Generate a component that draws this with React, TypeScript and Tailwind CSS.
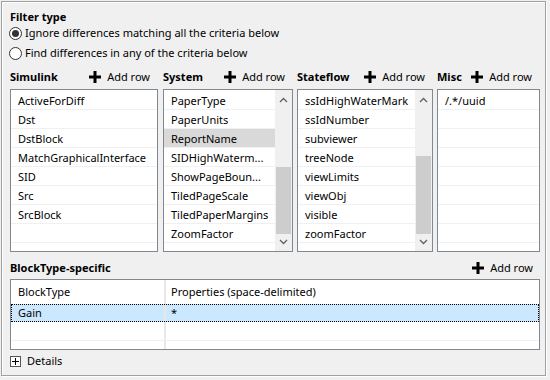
const simulink = ["ActiveForDiff", "Dst", "DstBlock", "MatchGraphicalInterface", "SID", "Src", "SrcBlock", "", ""];
const system = ["PaperType", "PaperUnits", "ReportName", "SIDHighWaterm...", "ShowPageBoun...", "TiledPageScale", "TiledPaperMargins", "ZoomFactor", ""];
const stateflow = ["ssIdHighWaterMark", "ssIdNumber", "subviewer", "treeNode", "viewLimits", "viewObj", "visible", "zoomFactor", ""];
const misc = ["/.*/uuid", "", "", "", "", "", "", "", ""];

function PlusIcon() {
  return (
    <svg width="12" height="12" viewBox="0 0 12 12">
      <rect x="4.5" y="0" width="3" height="12" fill="#000" />
      <rect x="0" y="4.5" width="12" height="3" fill="#000" />
    </svg>
  );
}

function AddRow() {
  return (
    <div className="flex items-center gap-[6px] font-normal">
      <PlusIcon />
      <span>Add row</span>
    </div>
  );
}

function Chevron({ up }: { up?: boolean }) {
  return (
    <svg width="9" height="6" viewBox="0 0 9 6">
      <polyline
        points={up ? "1,5 4.5,1.5 8,5" : "1,1 4.5,4.5 8,1"}
        fill="none"
        stroke="#606060"
        strokeWidth="1.3"
      />
    </svg>
  );
}

function Scrollbar({ thumbTop, thumbHeight }: { thumbTop: number; thumbHeight: number }) {
  return (
    <div className="relative w-[17px] h-full bg-[#f0f0f0] shrink-0">
      <div className="absolute top-[7px] left-0 w-full flex justify-center">
        <Chevron up />
      </div>
      <div
        className="absolute left-[1px] right-[1px] bg-[#cdcdcd]"
        style={{ top: thumbTop, height: thumbHeight }}
      />
      <div className="absolute bottom-[6px] left-0 w-full flex justify-center">
        <Chevron />
      </div>
    </div>
  );
}

function ListBox({
  items,
  selected,
  scroll,
}: {
  items: string[];
  selected?: number;
  scroll?: { top: number; height: number };
}) {
  return (
    <div className="flex h-[163px] border border-[#828790] bg-white overflow-hidden">
      <div className="flex-1 pt-[1px] overflow-hidden">
        {items.map((it, i) => (
          <div
            key={i}
            className={`h-[19px] border-b border-[#f0f0f0] pl-[7px] leading-[20px] whitespace-nowrap overflow-hidden ${
              selected === i ? "bg-[#d9d9d9]" : ""
            }`}
          >
            {it}
          </div>
        ))}
      </div>
      {scroll && <Scrollbar thumbTop={scroll.top} thumbHeight={scroll.height} />}
    </div>
  );
}

function Column({
  title,
  width,
  items,
  selected,
  scroll,
}: {
  title: string;
  width: string;
  items: string[];
  selected?: number;
  scroll?: { top: number; height: number };
}) {
  return (
    <div className={`flex flex-col ${width}`}>
      <div className="flex items-center justify-between h-[16px] pr-[8px] font-bold">
        <span>{title}</span>
        <AddRow />
      </div>
      <div className="mt-[4px]">
        <ListBox items={items} selected={selected} scroll={scroll} />
      </div>
    </div>
  );
}

function Radio({ checked, label }: { checked?: boolean; label: string }) {
  return (
    <div className="flex items-center h-[16px] gap-[1px]">
      <div className="w-[13px] h-[13px] rounded-full border border-[#333] bg-white flex items-center justify-center ml-[-1px]">
        {checked && <div className="w-[7px] h-[7px] rounded-full bg-[#333]" />}
      </div>
      <span className="ml-[2px]">{label}</span>
    </div>
  );
}

export default function App() {
  return (
    <div
      className="w-[550px] h-[380px] bg-[#f0f0f0] pt-[1px] pl-[1px] text-[11px] text-black"
      style={{ fontFamily: '"Noto Sans", "Segoe UI", sans-serif' }}
    >
      <div className="w-[545px] h-[375px] border border-[#a0a0a0] shadow-[inset_1px_1px_0_#fff,1px_1px_0_#fff] pl-[8px] pt-[7px] leading-[16px]">
        <div className="font-bold h-[16px]">Filter type</div>
        <Radio checked label="Ignore differences matching all the criteria below" />
        <div className="mt-[4px]">
          <Radio label="Find differences in any of the criteria below" />
        </div>

        <div className="flex gap-[4px] mt-[8px]">
          <Column title="Simulink" width="w-[148px] mr-[1px]" items={simulink} />
          <Column
            title="System"
            width="w-[130px]"
            items={system}
            selected={2}
            scroll={{ top: 77, height: 67 }}
          />
          <Column
            title="Stateflow"
            width="w-[136px]"
            items={stateflow}
            scroll={{ top: 66, height: 78 }}
          />
          <Column title="Misc" width="w-[103px]" items={misc} />
        </div>

        <div className="flex items-center justify-between w-[530px] pr-[7px] h-[16px] mt-[8px] font-bold">
          <span>BlockType-specific</span>
          <AddRow />
        </div>

        <div className="mt-[3px] w-[530px] h-[71px] border border-[#828790] bg-white overflow-hidden">
          <div className="flex h-[24px] items-center">
            <div className="w-[155px] pl-[7px] h-full flex items-center border-r-2 border-[#e8e8e8]">BlockType</div>
            <div className="pl-[5px]">Properties (space-delimited)</div>
          </div>
          <div className="flex h-[18px] items-center bg-[#cce8ff] border border-dotted border-black">
            <div className="w-[154px] pl-[6px] h-full flex items-center border-r-2 border-[#e8e8e8]">Gain</div>
            <div className="pl-[5px]">*</div>
          </div>
          <div className="flex h-[19px] border-b border-[#f0f0f0]">
            <div className="w-[155px] h-full border-r-2 border-[#e8e8e8]" />
          </div>
          <div className="flex h-[10px]">
            <div className="w-[155px] h-full border-r-2 border-[#e8e8e8]" />
          </div>
        </div>

        <div className="flex items-center mt-[3px] h-[16px] gap-[6px]">
          <div className="w-[11px] h-[11px] border border-[#555] bg-white flex items-center justify-center">
            <svg width="7" height="7" viewBox="0 0 7 7">
              <rect x="3" y="0" width="1" height="7" fill="#000" />
              <rect x="0" y="3" width="7" height="1" fill="#000" />
            </svg>
          </div>
          <span>Details</span>
        </div>
      </div>
    </div>
  );
}
